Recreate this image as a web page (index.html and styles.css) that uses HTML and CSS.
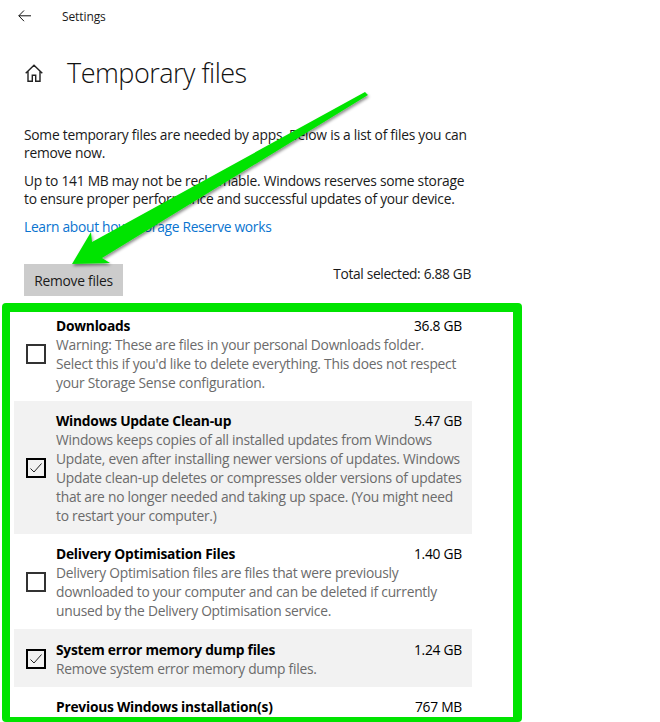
FILE: index.html
```html
<!DOCTYPE html>
<html lang="en">
<head>
	<meta charset="UTF-8">
	<title>Settings</title>
	<link rel="stylesheet" href="styles.css">
</head>
<body>
	<div class="titlebar">
		<svg class="back-icon" width="13" height="12" viewBox="0 0 13 12"><path d="M6 .5.800 5.800 6 11.200M.8 5.800H13" fill="none" stroke="#111" stroke-width="1"/></svg>
		<span class="app-name">Settings</span>
	</div>
	<div class="page-head">
		<svg class="home-icon" width="18" height="18" viewBox="0 0 18 18"><path d="M.7 9.300 9 1.200l8.300 8.100M3 7.500v9.700h4.300v-6h3.400v6H15V7.500" fill="none" stroke="#222" stroke-width="1.400"/></svg>
		<h1>Temporary files</h1>
	</div>
	<div class="intro">
		<p>Some temporary files are needed by apps. Below is a list of files you can remove now.</p>
		<p>Up to 141 MB may not be reclaimable. Windows reserves some storage to ensure proper performance and successful updates of your device.</p>
		<a class="learn" href="#">Learn about how Storage Reserve works</a>
	</div>
	<div class="actions">
		<a class="remove-btn" href="#">Remove files</a>
		<span class="total">Total selected: 6.88 GB</span>
	</div>
	<div class="highlight">
		<div class="file-list">
			<div class="file-item">
				<span class="check"></span>
				<div class="file-info">
					<div class="file-head"><b>Downloads</b><span>36.8 GB</span></div>
					<p>Warning: These are files in your personal Downloads folder. Select this if you'd like to delete everything. This does not respect your Storage Sense configuration.</p>
				</div>
			</div>
			<div class="file-item selected">
				<span class="check"><svg width="16" height="16" viewBox="0 0 16 16"><path d="M2.500 8.500 6 12l7.500-8.500" fill="none" stroke="#222" stroke-width="1"/></svg></span>
				<div class="file-info">
					<div class="file-head"><b>Windows Update Clean-up</b><span>5.47 GB</span></div>
					<p>Windows keeps copies of all installed updates from Windows Update, even after installing newer versions of updates. Windows Update clean-up deletes or compresses older versions of updates that are no longer needed and taking up space. (You might need to restart your computer.)</p>
				</div>
			</div>
			<div class="file-item">
				<span class="check"></span>
				<div class="file-info">
					<div class="file-head"><b>Delivery Optimisation Files</b><span>1.40 GB</span></div>
					<p>Delivery Optimisation files are files that were previously downloaded to your computer and can be deleted if currently unused by the Delivery Optimisation service.</p>
				</div>
			</div>
			<div class="file-item selected">
				<span class="check"><svg width="16" height="16" viewBox="0 0 16 16"><path d="M2.500 8.500 6 12l7.500-8.500" fill="none" stroke="#222" stroke-width="1"/></svg></span>
				<div class="file-info">
					<div class="file-head"><b>System error memory dump files</b><span>1.24 GB</span></div>
					<p>Remove system error memory dump files.</p>
				</div>
			</div>
			<div class="file-item last">
				<div class="file-info">
					<div class="file-head"><b>Previous Windows installation(s)</b><span>767 MB</span></div>
				</div>
			</div>
		</div>
	</div>
	<svg class="arrow" width="660" height="300" viewBox="0 0 660 300">
		<defs>
			<filter id="arrow-shadow" x="-10%" y="-10%" width="120%" height="120%">
				<feDropShadow dx="1" dy="2" stdDeviation="1.500" flood-color="#000" flood-opacity="0.45"/>
			</filter>
		</defs>
		<polygon points="365,92 368,95 102,258 110,263 72,264 91,232 92,242" fill="#00e400" filter="url(#arrow-shadow)"/>
	</svg>
</body>
</html>
```

FILE: styles.css
```css
html,body{
	margin:0;
	background: #fff;
	height: 722px;
	overflow: hidden;
}
body{
	position: relative;
	font-family: "Open Sans", "Noto Sans", sans-serif;
	font-size: 13.8px;
	letter-spacing: -0.25px;
	color: #1a1a1a;
}
.titlebar{
	display: flex;
	align-items: center;
	height: 32px;
	padding-left: 18px;
}
.back-icon{
	margin-right: 31px;
}
.app-name{
	font-size: 12px;
	letter-spacing: -0.1px;
}
.page-head{
	display: flex;
	align-items: center;
	height: 40px;
	margin-top: 21px;
	padding-left: 25px;
}
.home-icon{
	margin-right: 24px;
}
h1{
	margin: -2px 0 0;
	font-size: 27px;
	font-weight: 300;
	letter-spacing: -0.5px;
	color: #111;
}
.intro{
	width: 447px;
	margin: 33px 0 0 24px;
}
.intro p{
	margin: 0 0 10px;
	line-height: 18px;
}
.learn{
	display: block;
	color: #0a74d0;
	text-decoration: none;
	line-height: 18px;
	letter-spacing: -0.3px;
}
.actions{
	display: flex;
	justify-content: space-between;
	width: 447px;
	margin: 28px 0 0 24px;
}
.remove-btn{
	display: block;
	width: 99px;
	height: 32px;
	line-height: 33px;
	text-align: center;
	background: #ccc;
	color: #1a1a1a;
	text-decoration: none;
}
.total{
	letter-spacing: -0.35px;
}
.highlight{
	box-sizing: border-box;
	width: 520px;
	height: 419px;
	margin: 7px 0 0 2px;
	border-style: solid;
	border-color: #00e400;
	border-width: 9px 9px 5px 8px;
	border-radius: 4px;
	overflow: hidden;
	padding-left: 4px;
}
.file-list{
	width: 458px;
	margin-top: -6px;
}
.file-item{
	display: flex;
	align-items: center;
	min-height: 39px;
	padding: 10px 10px 9px 12px;
}
.file-item.selected{
	background: #f2f2f2;
}
.file-item.last{
	align-items: flex-start;
	min-height: 0;
}
.check{
	flex: none;
	box-sizing: border-box;
	display: flex;
	align-items: center;
	justify-content: center;
	width: 20px;
	height: 20px;
	margin-right: 10px;
	border: 2px solid #333;
}
.selected .check{
	border-color: #000;
}
.file-info{
	flex: 1;
	min-width: 0;
}
.last .file-info{
	margin-left: 30px;
}
.file-head{
	display: flex;
	justify-content: space-between;
	line-height: 19px;
	color: #000;
}
.file-info p{
	margin: 0;
	line-height: 19px;
	color: #6b6b6b;
}
.arrow{
	position: absolute;
	top: 0;
	left: 0;
}
```
